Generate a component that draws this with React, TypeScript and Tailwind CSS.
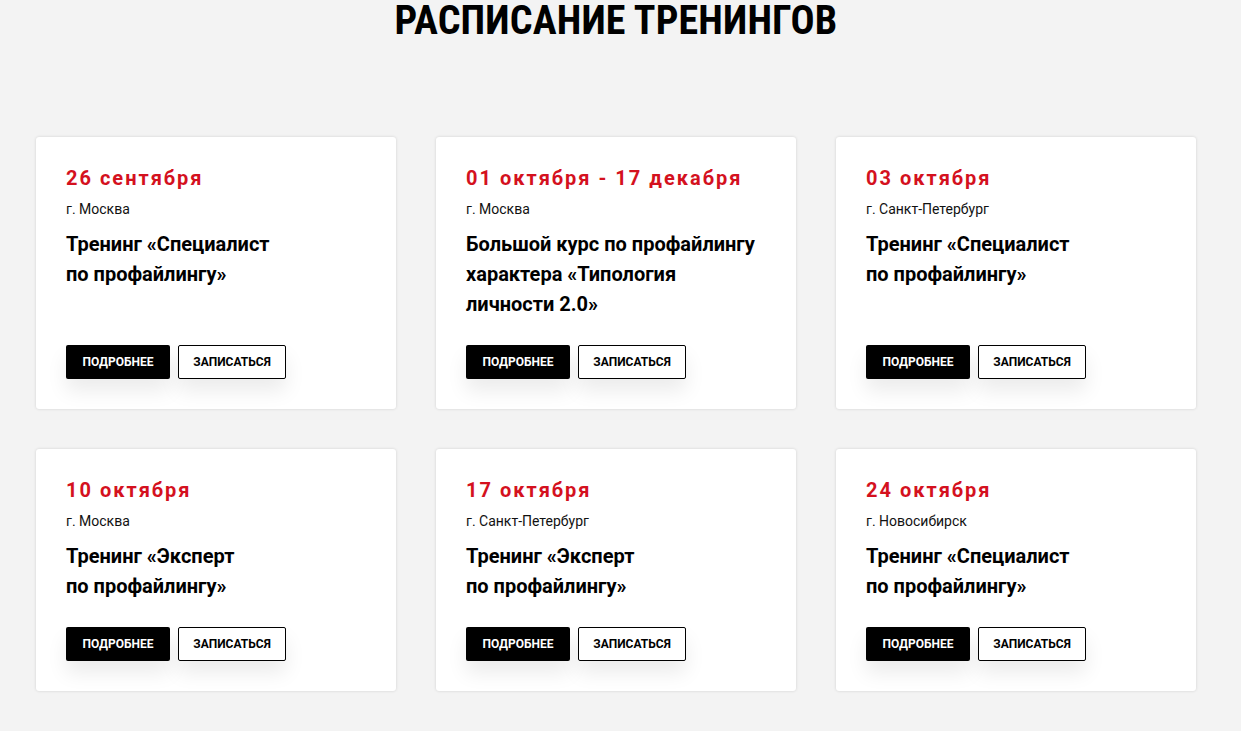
const trainings = [
  { date: '26 сентября', city: 'г. Москва', title: ['Тренинг «Специалист', 'по профайлингу»'] },
  { date: '01 октября - 17 декабря', city: 'г. Москва', title: ['Большой курс по профайлингу', 'характера «Типология', 'личности 2.0»'] },
  { date: '03 октября', city: 'г. Санкт-Петербург', title: ['Тренинг «Специалист', 'по профайлингу»'] },
  { date: '10 октября', city: 'г. Москва', title: ['Тренинг «Эксперт', 'по профайлингу»'] },
  { date: '17 октября', city: 'г. Санкт-Петербург', title: ['Тренинг «Эксперт', 'по профайлингу»'] },
  { date: '24 октября', city: 'г. Новосибирск', title: ['Тренинг «Специалист', 'по профайлингу»'] },
];

type Training = (typeof trainings)[number];

const Card = ({ item }: { item: Training }) => (
  <div className="flex flex-col bg-white rounded-[3px] shadow-[0_0_3px_rgba(0,0,0,0.15)] pl-[30px] pr-[20px] pt-[28px] pb-[30px]">
    <div className="whitespace-nowrap text-[20px] leading-[26px] font-bold tracking-[2px] text-[#d4111e]">{item.date}</div>
    <div className="mt-[8px] text-[14px] leading-[20px] text-[#111]">{item.city}</div>
    <div className="mt-[10px] text-[20px] leading-[30px] font-bold text-black">
      {item.title.map((line) => (
        <div key={line} className="whitespace-nowrap">{line}</div>
      ))}
    </div>
    {/* buttons sit at the bottom so they line up across a row */}
    <div className="mt-auto pt-[26px] flex gap-[8px]">
      <button className="h-[34px] w-[104px] rounded-[2px] bg-black text-white text-[12px] font-bold uppercase shadow-[0_12px_20px_rgba(0,0,0,0.08)]">
        Подробнее
      </button>
      <button className="h-[34px] w-[108px] rounded-[2px] border border-black bg-white text-black text-[12px] font-bold uppercase shadow-[0_12px_20px_rgba(0,0,0,0.08)]">
        Записаться
      </button>
    </div>
  </div>
);

export default function App() {
  return (
    <div className="min-h-[731px] bg-[#f3f3f3] font-['Roboto',sans-serif]">
      <div className="w-[1160px] ml-[36px]">
        <h1 className="text-center text-[40px] leading-[42px] font-bold font-stretch-condensed tracking-[0.15px] uppercase text-black">
          Расписание тренингов
        </h1>
        <div className="mt-[95px] grid grid-cols-3 gap-[40px]">
          {trainings.map((t) => (
            <Card key={t.date} item={t} />
          ))}
        </div>
      </div>
    </div>
  );
}
